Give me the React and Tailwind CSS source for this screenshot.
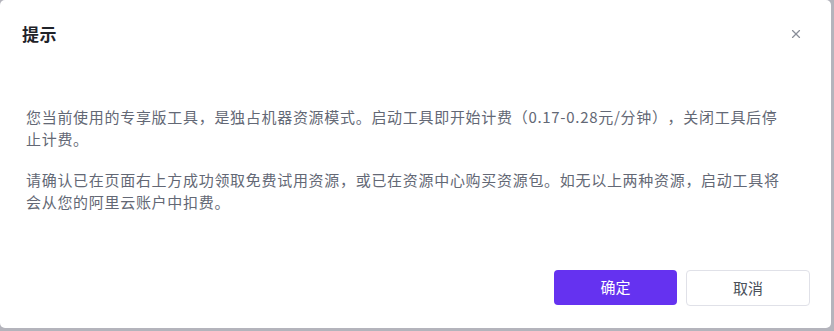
import React from 'react';
import { X } from 'lucide-react';

const font = { fontFamily: '"Noto Sans CJK SC", sans-serif' };

export default function App() {
    return (
        <div className="w-[834px] h-[331px] bg-[#b4b4bc]" style={font}>
            {/* 弹窗 */}
            <div className="w-[831px] h-[328px] bg-white rounded-[5px] flex flex-col">
                <div className="flex items-center justify-between pl-[22px] pr-[28px] pt-[20px] h-[47px]">
                    <h3 className="text-[17px] font-bold text-[#1f2329] leading-[26px] tracking-[0.5px]">提示</h3>
                    <button className="text-[#8a8f99]">
                        <X className="w-[14px] h-[14px]" strokeWidth={2} />
                    </button>
                </div>
                <div className="pl-[26px] pr-[40px] pt-[59px] text-[15px] leading-[22px] tracking-[0.7px] text-[#636875] [text-spacing-trim:space-all]">
                    <p className="mb-[19px]">
                        您当前使用的专享版工具，是独占机器资源模式。启动工具即开始计费（0.17-0.28元/分钟），关闭工具后停止计费。
                    </p>
                    <p>
                        请确认已在页面右上方成功领取免费试用资源，或已在资源中心购买资源包。如无以上两种资源，启动工具将会从您的阿里云账户中扣费。
                    </p>
                </div>
                <div className="mt-auto flex justify-end gap-[9px] pr-[21px] pb-[22px]">
                    <button className="w-[123px] h-[35px] rounded-[4px] bg-[#6532f0] text-white text-[15px]">确定</button>
                    <button className="w-[124px] h-[36px] rounded-[4px] border border-[#e0e1e8] bg-white text-[#4a4f5a] text-[15px]">取消</button>
                </div>
            </div>
        </div>
    );
}
